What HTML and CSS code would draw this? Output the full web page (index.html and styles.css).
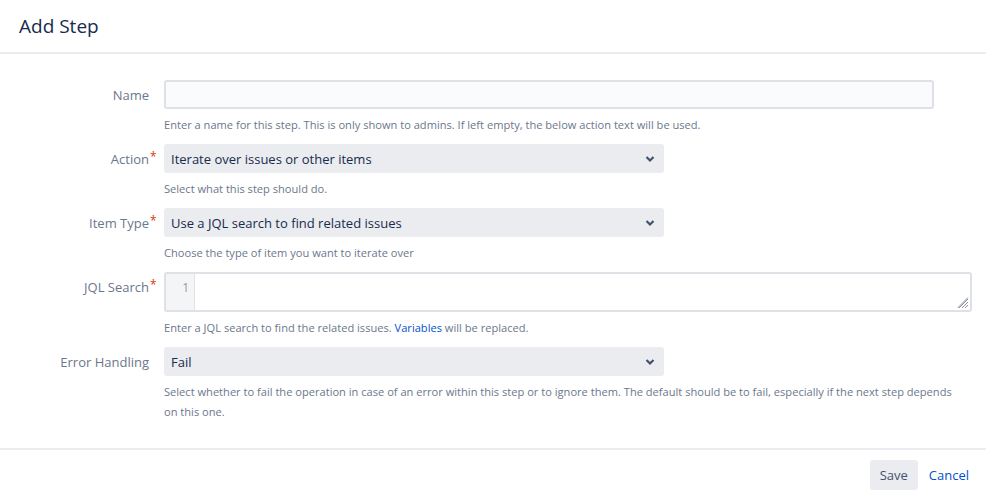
FILE: index.html
```html
<!DOCTYPE html>
<html lang="en">
<head>
<meta charset="UTF-8">
<meta name="viewport" content="width=device-width, initial-scale=1.0">
<title>Add Step</title>
<link rel="stylesheet" href="styles.css">
</head>
<body>
<div class="dialog">
    <div class="header"><h2 class="title">Add Step</h2></div>
    <form class="content">
        <div class="row">
            <label class="label">Name</label>
            <div class="field">
                <input class="text" type="text">
                <div class="help">Enter a name for this step. This is only shown to admins. If left empty, the below action text will be used.</div>
            </div>
        </div>
        <div class="row">
            <label class="label">Action<span class="req">*</span></label>
            <div class="field">
                <div class="select">
                    <span>Iterate over issues or other items</span>
                    <svg class="chev" width="10" height="8" viewBox="0 0 10 8"><path d="M1.5 2 L5 5.5 L8.5 2" fill="none" stroke="#42526e" stroke-width="2.2"/></svg>
                </div>
                <div class="help">Select what this step should do.</div>
            </div>
        </div>
        <div class="row">
            <label class="label">Item Type<span class="req">*</span></label>
            <div class="field">
                <div class="select">
                    <span>Use a JQL search to find related issues</span>
                    <svg class="chev" width="10" height="8" viewBox="0 0 10 8"><path d="M1.5 2 L5 5.5 L8.5 2" fill="none" stroke="#42526e" stroke-width="2.2"/></svg>
                </div>
                <div class="help">Choose the type of item you want to iterate over</div>
            </div>
        </div>
        <div class="row">
            <label class="label">JQL Search<span class="req">*</span></label>
            <div class="field wide">
                <div class="editor">
                    <div class="gutter">1</div>
                    <div class="code"></div>
                    <svg class="grip" width="12" height="12" viewBox="0 0 12 12">
                        <path d="M11 2 L2 11 M11 5 L5 11 M11 8 L8 11 M11 0.5 L0.5 11" stroke="#8993a4" stroke-width="1"/>
                    </svg>
                </div>
                <div class="help">Enter a JQL search to find the related issues. <a href="#" class="link">Variables</a> will be replaced.</div>
            </div>
        </div>
        <div class="row">
            <label class="label">Error Handling</label>
            <div class="field wide">
                <div class="select">
                    <span>Fail</span>
                    <svg class="chev" width="10" height="8" viewBox="0 0 10 8"><path d="M1.5 2 L5 5.5 L8.5 2" fill="none" stroke="#42526e" stroke-width="2.2"/></svg>
                </div>
                <div class="help">Select whether to fail the operation in case of an error within this step or to ignore them. The default should be to fail, especially if the next step depends on this one.</div>
            </div>
        </div>
    </form>
    <div class="footer">
        <button class="btn">Save</button>
        <a href="#" class="cancel">Cancel</a>
    </div>
</div>
</body>
</html>
```

FILE: styles.css
```css
body {
    margin: 0;
    background-color: #fff;
    font-family: "Open Sans", "Noto Sans", sans-serif;
    color: #172b4d;
}

.dialog {
    width: 986px;
    height: 498px;
}

.header {
    height: 52px;
    border-bottom: 2px solid #ebecf0;
    display: flex;
    align-items: center;
    padding-left: 19px;
}

.title {
    margin: 0;
    font-size: 19px;
    font-weight: 400;
    color: #172b4d;
}

.content {
    padding-top: 26px;
    height: 368px;
}

.row {
    display: flex;
    margin-bottom: 9px;
}

.label {
    width: 149px;
    flex: none;
    text-align: right;
    font-size: 13px;
    color: #6b778c;
    line-height: 31px;
    position: relative;
}

.req {
    color: #de350b;
    position: absolute;
    left: 100%;
    top: -3px;
    padding-left: 1px;
    font-size: 12px;
}

.field {
    margin-left: 15px;
    width: 500px;
}

.field.wide {
    width: 808px;
}

.field.wide .help {
    max-width: 795px;
}

.row:first-child .field {
    width: 770px;
}

.text {
    box-sizing: border-box;
    width: 100%;
    height: 29px;
    margin: 0;
    border: 2px solid #dfe1e6;
    border-radius: 3px;
    background-color: #fafbfc;
    display: block;
}

.select {
    height: 29px;
    background-color: #ebecf0;
    border-radius: 3px;
    display: flex;
    align-items: center;
    justify-content: space-between;
    padding: 0 9px 0 7px;
    font-size: 13px;
    color: #172b4d;
}

.row:last-child .field .select {
    width: 484px;
}

.editor {
    box-sizing: border-box;
    height: 40px;
    border: 2px solid #dfe1e6;
    border-radius: 3px;
    display: flex;
    position: relative;
}

.gutter {
    width: 29px;
    background-color: #f4f5f7;
    border-right: 1px solid #dfe1e6;
    text-align: right;
    box-sizing: border-box;
    padding: 5px 5px 0 0;
    color: #999;
    font-size: 12px;
}

.code {
    flex: 1;
}

.grip {
    position: absolute;
    right: 1px;
    bottom: 1px;
}

.help {
    font-size: 11.1px;
    color: #6b778c;
    line-height: 20px;
    margin-top: 6px;
}

.link {
    color: #0052cc;
    text-decoration: none;
}

.footer {
    border-top: 2px solid #ebecf0;
    display: flex;
    justify-content: flex-end;
    align-items: center;
    padding: 10px 17px 0 0;
}

.btn {
    height: 30px;
    padding: 0 10px;
    border: none;
    border-radius: 3px;
    background-color: #ebecf0;
    color: #42526e;
    font-family: inherit;
    font-size: 13px;
}

.cancel {
    margin-left: 11px;
    font-size: 13px;
    color: #0052cc;
    text-decoration: none;
}
```
